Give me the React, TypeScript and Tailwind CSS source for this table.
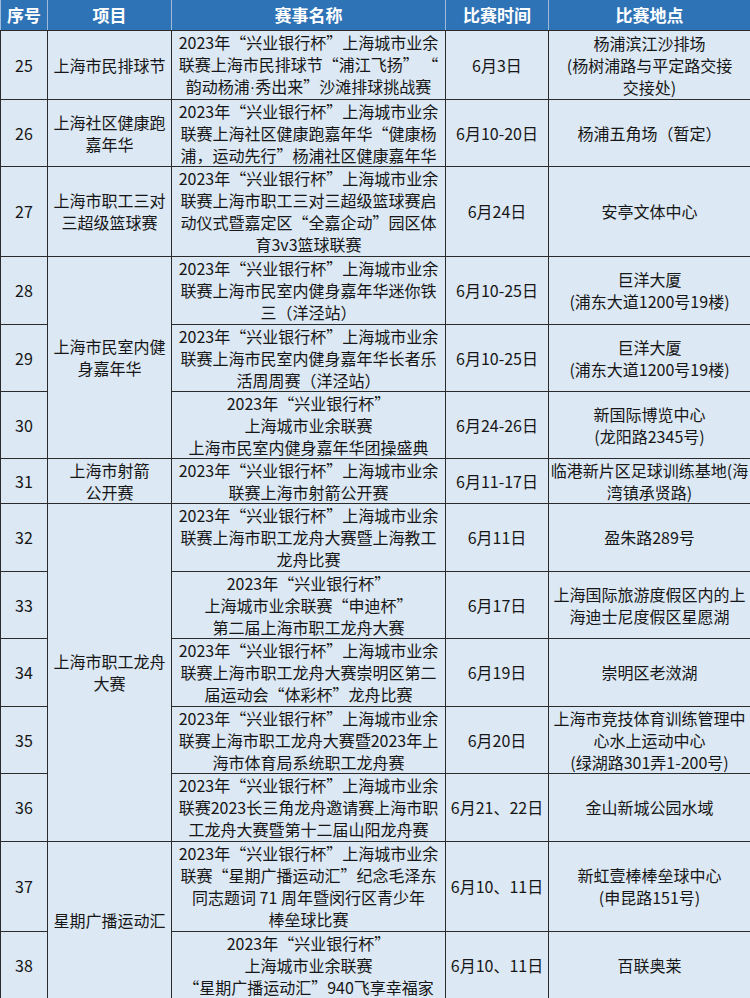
import React from "react";

type Row = {
  no: number;
  h: string;
  project?: { lines: string[]; span: number };
  name: string[];
  date: string;
  place: string[];
};

const P = "2023年“兴业银行杯”上海城市业余";
const S = "2023年“兴业银行杯”";

const rows: Row[] = [
  {
    no: 25,
    h: "h-[68px]",
    project: { lines: ["上海市民排球节"], span: 1 },
    name: [P, "联赛上海市民排球节“浦江飞扬” “", "韵动杨浦·秀出来”沙滩排球挑战赛"],
    date: "6月3日",
    place: ["杨浦滨江沙排场", "(杨树浦路与平定路交接", "交接处)"],
  },
  {
    no: 26,
    h: "h-[67px]",
    project: { lines: ["上海社区健康跑", "嘉年华"], span: 1 },
    name: [P, "联赛上海社区健康跑嘉年华“健康杨", "浦，运动先行”杨浦社区健康嘉年华"],
    date: "6月10-20日",
    place: ["杨浦五角场（暂定）"],
  },
  {
    no: 27,
    h: "h-[90px]",
    project: { lines: ["上海市职工三对", "三超级篮球赛"], span: 1 },
    name: [P, "联赛上海市职工三对三超级篮球赛启", "动仪式暨嘉定区“全嘉企动”园区体", "育3v3篮球联赛"],
    date: "6月24日",
    place: ["安亭文体中心"],
  },
  {
    no: 28,
    h: "h-[68px]",
    project: { lines: ["上海市民室内健", "身嘉年华"], span: 3 },
    name: [P, "联赛上海市民室内健身嘉年华迷你铁", "三（洋泾站）"],
    date: "6月10-25日",
    place: ["巨洋大厦", "(浦东大道1200号19楼)"],
  },
  {
    no: 29,
    h: "h-[67px]",
    name: [P, "联赛上海市民室内健身嘉年华长者乐", "活周周赛（洋泾站）"],
    date: "6月10-25日",
    place: ["巨洋大厦", "(浦东大道1200号19楼)"],
  },
  {
    no: 30,
    h: "h-[67px]",
    name: [S, "上海城市业余联赛", "上海市民室内健身嘉年华团操盛典"],
    date: "6月24-26日",
    place: ["新国际博览中心", "(龙阳路2345号)"],
  },
  {
    no: 31,
    h: "h-[45px]",
    project: { lines: ["上海市射箭", "公开赛"], span: 1 },
    name: [P, "联赛上海市射箭公开赛"],
    date: "6月11-17日",
    place: ["临港新片区足球训练基地(海", "湾镇承贤路)"],
  },
  {
    no: 32,
    h: "h-[68px]",
    project: { lines: ["上海市职工龙舟", "大赛"], span: 5 },
    name: [P, "联赛上海市职工龙舟大赛暨上海教工", "龙舟比赛"],
    date: "6月11日",
    place: ["盈朱路289号"],
  },
  {
    no: 33,
    h: "h-[67px]",
    name: [S, "上海城市业余联赛“申迪杯”", "第二届上海市职工龙舟大赛"],
    date: "6月17日",
    place: ["上海国际旅游度假区内的上", "海迪士尼度假区星愿湖"],
  },
  {
    no: 34,
    h: "h-[68px]",
    name: [P, "联赛上海市职工龙舟大赛崇明区第二", "届运动会“体彩杯”龙舟比赛"],
    date: "6月19日",
    place: ["崇明区老滧湖"],
  },
  {
    no: 35,
    h: "h-[67px]",
    name: [P, "联赛上海市职工龙舟大赛暨2023年上", "海市体育局系统职工龙舟赛"],
    date: "6月20日",
    place: ["上海市竞技体育训练管理中", "心水上运动中心", "(绿湖路301弄1-200号)"],
  },
  {
    no: 36,
    h: "h-[68px]",
    name: [P, "联赛2023长三角龙舟邀请赛上海市职", "工龙舟大赛暨第十二届山阳龙舟赛"],
    date: "6月21、22日",
    place: ["金山新城公园水域"],
  },
  {
    no: 37,
    h: "h-[90px]",
    project: { lines: ["星期广播运动汇"], span: 2 },
    name: [P, "联赛“星期广播运动汇”纪念毛泽东", "同志题词 71 周年暨闵行区青少年", "棒垒球比赛"],
    date: "6月10、11日",
    place: ["新虹壹棒棒垒球中心", "(申昆路151号)"],
  },
  {
    no: 38,
    h: "h-[67px]",
    name: [S, "上海城市业余联赛", "“星期广播运动汇”940飞享幸福家"],
    date: "6月10、11日",
    place: ["百联奥莱"],
  },
];

// the middle dot is narrow in the original, so give it a latin font
function Line({ text }: { text: string }) {
  const parts = text.split("·");
  return (
    <div className="whitespace-pre">
      {parts.map((p, i) => (
        <React.Fragment key={i}>
          {i > 0 && <span className="font-['Liberation_Sans']">·</span>}
          {p}
        </React.Fragment>
      ))}
    </div>
  );
}

function Lines({ lines }: { lines: string[] }) {
  return (
    <>
      {lines.map((l, i) => (
        <Line key={i} text={l} />
      ))}
    </>
  );
}

const td = "border border-[#2b2b2b] px-0 text-center align-middle";

export default function App() {
  return (
    <div
      className="w-[750px] bg-white text-[16px] leading-[22px] text-[#161616]"
      style={{ fontFamily: '"Noto Sans CJK SC", "Noto Sans", sans-serif' }}
    >
      <table className="w-[750px] table-fixed border-collapse bg-[#dce8f4]">
        <colgroup>
          <col className="w-[47px]" />
          <col className="w-[124px]" />
          <col className="w-[274px]" />
          <col className="w-[103px]" />
          <col className="w-[202px]" />
        </colgroup>
        <thead>
          <tr className="h-[30px] bg-[#2f73b7] text-white">
            {["序号", "项目", "赛事名称", "比赛时间", "比赛地点"].map((t) => (
              <th
                key={t}
                className="border-x border-b border-x-[#9fbbdc] border-b-[#2b2b2b] text-center text-[17px] font-bold"
              >
                {t}
              </th>
            ))}
          </tr>
        </thead>
        <tbody>
          {rows.map((r) => (
            <tr key={r.no} className={r.h}>
              <td className={td}>{r.no}</td>
              {r.project && (
                <td className={td} rowSpan={r.project.span}>
                  <Lines lines={r.project.lines} />
                </td>
              )}
              <td className={td}>
                <Lines lines={r.name} />
              </td>
              <td className={td}>{r.date}</td>
              <td className={td}>
                <Lines lines={r.place} />
              </td>
            </tr>
          ))}
        </tbody>
      </table>
    </div>
  );
}
